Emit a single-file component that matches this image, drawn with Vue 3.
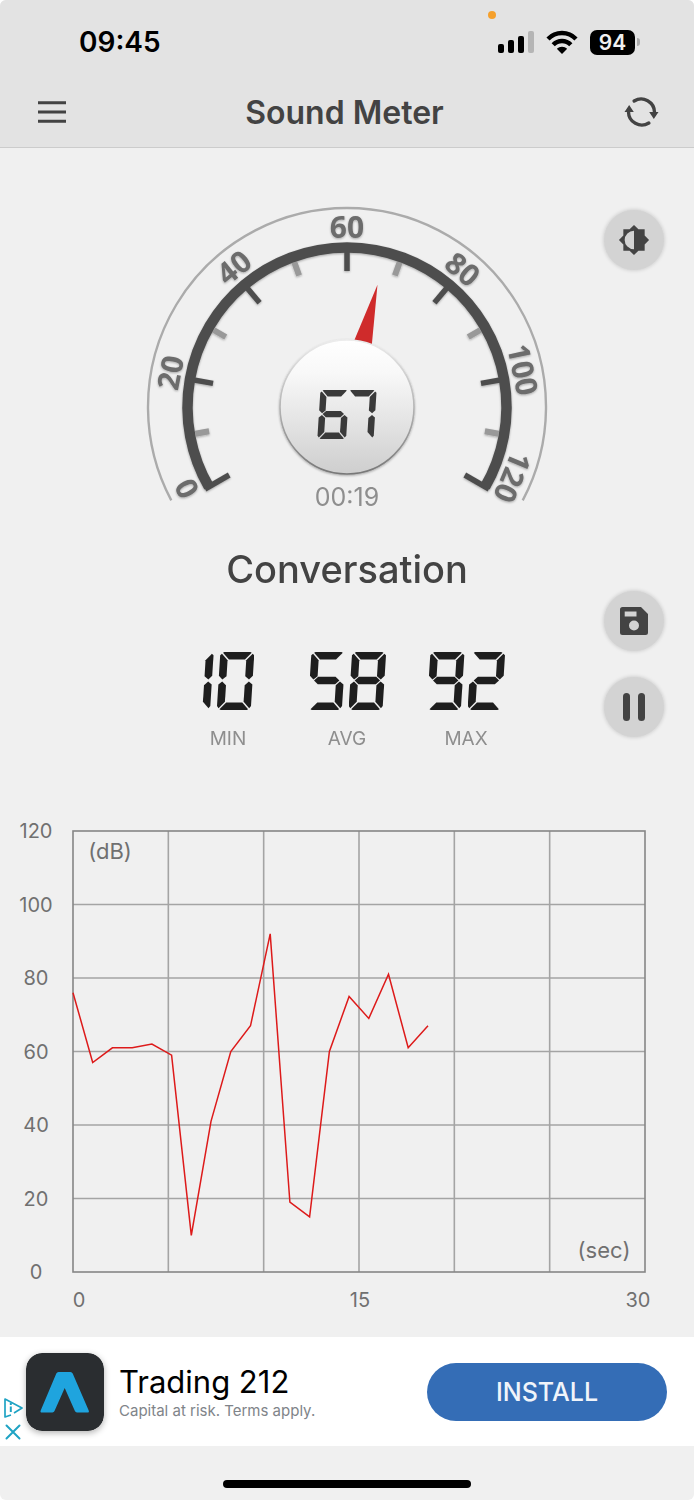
<script setup>
const level = 67
const elapsed = '00:19'
const stats = [
  { label: 'MIN', value: 10 },
  { label: 'AVG', value: 58 },
  { label: 'MAX', value: 92 },
]

/* Seven-segment display: upright outlines on a 102 x 175 grid, slanted below. */
const segments = {
  a: [[8, 2], [12, 0], [90, 0], [94, 2], [75, 23], [27, 23]],
  b: [[97, 5], [102, 10], [102, 72], [91, 83], [79, 73], [79, 25]],
  c: [[91, 89], [102, 98], [102, 163], [97, 170], [79, 150], [79, 100]],
  d: [[27, 152], [75, 152], [94, 173], [90, 175], [12, 175], [8, 173]],
  e: [[11, 89], [23, 100], [23, 150], [5, 170], [0, 163], [0, 98]],
  f: [[5, 5], [23, 25], [23, 73], [11, 83], [0, 72], [0, 10]],
  g: [[25, 75], [77, 75], [89, 86], [77, 97], [25, 97], [13, 86]],
}
const lit = {
  0: 'abcdef', 1: 'bc', 2: 'abged', 3: 'abgcd', 4: 'fgbc',
  5: 'afgcd', 6: 'afgedc', 7: 'abc', 8: 'abcdefg', 9: 'abcdfg',
}
const slant = 11
const outline = (name) => {
  const pts = segments[name].map(([x, y]) => {
    const sx = x + slant * (1 - y / 175)
    return `${(sx / 1.13).toFixed(2)}% ${(y / 1.75).toFixed(2)}%`
  })
  return { clipPath: `polygon(${pts.join(', ')})` }
}
const digits = (value) => String(value).split('')

/* Gauge: 0..120 dB over 240 degrees. */
const degrees = (db) => db * 2 - 120
const majors = [0, 20, 40, 60, 80, 100, 120]
const minors = [10, 30, 50, 70, 90, 110]
const marks = [
  { text: 0, turn: -117 },
  { text: 20, turn: -79 },
  { text: 40, turn: -39 },
  { text: 60, turn: 0 },
  { text: 80, turn: 40 },
  { text: 100, turn: 78 },
  { text: 120, turn: 113 },
]
const polar = (r, deg) => {
  const a = (deg * Math.PI) / 180
  return `${(202 + r * Math.sin(a)).toFixed(2)} ${(202 - r * Math.cos(a)).toFixed(2)}`
}
const arc = (r, deg) => `M${polar(r, -deg)}A${r} ${r} 0 1 1 ${polar(r, deg)}`

/* Chart */
const samples = [76, 57, 61, 61, 62, 59, 10, 41, 60, 67, 92, 19, 15, 60, 75, 69, 81, 61, 67]
const left = 73
const top = 12
const width = 572
const height = 441
const yAt = (db) => top + height - (db / 120) * height
const line = samples
  .map((db, i) => `${(left + i * 19.72).toFixed(1)},${yAt(db).toFixed(1)}`)
  .join(' ')
const rows = [20, 40, 60, 80, 100]
const cols = [1, 2, 3, 4, 5]
</script>

<template>
  <div class="screen">
    <header class="top">
      <div class="status">
        <span class="mic-dot"></span>
        <time class="clock">09:45</time>
        <div class="status-icons">
          <svg width="36" height="24" viewBox="0 0 36 24" aria-hidden="true">
            <rect x="0" y="14" width="6" height="9" rx="2" />
            <rect x="10" y="10" width="6" height="13" rx="2" />
            <rect x="20" y="6" width="6" height="17" rx="2" />
            <rect x="30" y="1" width="6" height="22" rx="2" fill="#b5b5b5" />
          </svg>
          <svg class="wifi" width="32" height="24" viewBox="0 0 32 24" aria-hidden="true">
            <path d="M2 9A19.5 19.5 0 0 1 30 9" fill="none" stroke="#000" stroke-width="4.4" />
            <path d="M7.2 14.8A12 12 0 0 1 24.8 14.8" fill="none" stroke="#000" stroke-width="4.4" />
            <path d="M16 24L10.8 18.8A7.4 7.4 0 0 1 21.2 18.8Z" />
          </svg>
          <span class="battery">94</span>
          <span class="nub"></span>
        </div>
      </div>
      <nav class="bar">
        <button class="plain" type="button" aria-label="Menu">
          <svg width="28" height="22" viewBox="0 0 28 22">
            <path d="M0 1.8H28M0 11H28M0 20.2H28" stroke="#434343" stroke-width="3" />
          </svg>
        </button>
        <h1>Sound Meter</h1>
        <button class="plain" type="button" aria-label="Reset">
          <svg width="37" height="34" viewBox="0 0 110 102">
            <g fill="none" stroke="#434343" stroke-width="10" stroke-linecap="round">
              <path d="M33 18A40 40 0 0 1 94 52" />
              <path d="M77 84A40 40 0 0 1 16 50" />
            </g>
            <path d="M78 51H106L92 72ZM4 51H32L18 30Z" fill="#434343" />
          </svg>
        </button>
      </nav>
    </header>

    <main>
      <section class="row gauge-row">
        <div class="gauge">
          <svg class="dial" viewBox="0 0 404 312" aria-hidden="true">
            <defs>
              <linearGradient id="knob" x1="0" y1="0" x2="0" y2="1">
                <stop offset="0" stop-color="#ffffff" />
                <stop offset="0.25" stop-color="#f8f8f8" />
                <stop offset="1" stop-color="#cecece" />
              </linearGradient>
              <linearGradient id="rim" x1="0" y1="0" x2="0" y2="1">
                <stop offset="0" stop-color="#ececec" />
                <stop offset="0.5" stop-color="#b4b4b4" />
                <stop offset="1" stop-color="#777777" />
              </linearGradient>
              <filter id="soft" x="-10%" y="-10%" width="120%" height="120%">
                <feDropShadow dx="0" dy="1" stdDeviation="1" flood-color="#000" flood-opacity="0.3" />
              </filter>
            </defs>
            <path :d="arc(199, 118)" fill="none" stroke="#ababab" stroke-width="2.4" />
            <g filter="url(#soft)">
              <line
                v-for="db in minors" :key="db" x1="202" x2="202" y1="48" y2="62"
                stroke="#999999" stroke-width="6" :transform="`rotate(${degrees(db)} 202 202)`"
              />
              <path :d="arc(159.5, 120)" fill="none" stroke="#4e4e4e" stroke-width="10.5" />
              <line
                v-for="db in majors" :key="db" x1="202" x2="202" y1="38" y2="66"
                stroke="#4e4e4e" stroke-width="5.5" :transform="`rotate(${degrees(db)} 202 202)`"
              />
              <text
                v-for="m in marks" :key="m.text" x="202" y="33" class="mark"
                :transform="`rotate(${m.turn} 202 202)`"
              >{{ m.text }}</text>
            </g>
            <path d="M202 76L212 142H192Z" fill="#cf2b2b" :transform="`rotate(${degrees(level)} 202 202)`" />
            <circle cx="202" cy="202" r="67" fill="url(#knob)" stroke="url(#rim)" stroke-width="1.6" filter="url(#soft)" />
          </svg>
          <div class="readout">
            <div class="lcd lcd-small" role="img" :aria-label="`${level} dB`">
              <span v-for="(d, i) in digits(level)" :key="i" class="digit" :class="`digit-${d}`">
                <i v-for="s in lit[d]" :key="s" :style="outline(s)"></i>
              </span>
            </div>
            <time class="elapsed">{{ elapsed }}</time>
          </div>
        </div>
        <div class="tools">
          <button class="round" type="button" aria-label="Theme">
            <svg width="32" height="32" viewBox="0 0 24 24" fill="#434343">
              <path fill-rule="evenodd" d="M20 15.3L23.3 12L20 8.7V4H15.3L12 .7L8.7 4H4V8.7L.7 12L4 15.3V20H8.7L12 23.3L15.3 20H20ZM12 19V5A7 7 0 0 0 12 19Z" />
            </svg>
          </button>
        </div>
      </section>

      <section class="row stats-row">
        <div class="summary">
          <h2>Conversation</h2>
          <dl class="stats">
            <div v-for="s in stats" :key="s.label" class="stat">
              <dt>{{ s.label }}</dt>
              <dd class="lcd" role="img" :aria-label="String(s.value)">
                <span v-for="(d, i) in digits(s.value)" :key="i" class="digit" :class="`digit-${d}`">
                  <i v-for="seg in lit[d]" :key="seg" :style="outline(seg)"></i>
                </span>
              </dd>
            </div>
          </dl>
        </div>
        <div class="tools tools-low">
          <button class="round" type="button" aria-label="Save">
            <svg width="28" height="28" viewBox="0 0 28 28" fill="#434343">
              <path fill-rule="evenodd" d="M2.5 0H21L28 7V25.5A2.5 2.5 0 0 1 25.5 28H2.5A2.5 2.5 0 0 1 0 25.5V2.5A2.5 2.5 0 0 1 2.5 0ZM4.7 4.5V9.5H16.5V4.5ZM14 13.5A5 5 0 0 0 14 23.5A5 5 0 0 0 14 13.5Z" />
            </svg>
          </button>
          <button class="round" type="button" aria-label="Pause">
            <svg width="22" height="28" viewBox="0 0 22 28" fill="#434343">
              <rect width="7" height="28" rx="3.5" />
              <rect x="15" width="7" height="28" rx="3.5" />
            </svg>
          </button>
        </div>
      </section>

      <svg class="chart" viewBox="0 0 694 500" role="img" aria-label="Sound level over time">
        <g stroke="#a4a4a4" stroke-width="1.6">
          <line v-for="db in rows" :key="`r${db}`" :x1="left" :x2="left + width" :y1="yAt(db)" :y2="yAt(db)" />
          <line v-for="c in cols" :key="`c${c}`" :x1="left + (width / 6) * c" :x2="left + (width / 6) * c" :y1="top" :y2="top + height" />
        </g>
        <rect :x="left" :y="top" :width="width" :height="height" fill="none" stroke="#868686" stroke-width="1.6" />
        <polyline :points="line" fill="none" stroke="#dd1a1a" stroke-width="1.5" />
        <g class="axis">
          <text v-for="db in [0, 20, 40, 60, 80, 100, 120]" :key="db" x="36" :y="yAt(db) + 7">{{ db }}</text>
          <text x="79" y="488">0</text>
          <text x="360" y="488">15</text>
          <text x="638" y="488">30</text>
          <text class="unit" x="110" y="40">(dB)</text>
          <text class="unit" x="604" y="439">(sec)</text>
        </g>
      </svg>
    </main>

    <aside class="ad">
      <div class="ad-controls">
        <button class="plain" type="button" aria-label="About this ad">
          <svg width="20" height="20" viewBox="0 0 20 20" fill="none" stroke="#1fa3c4" stroke-width="1.7" stroke-linejoin="round">
            <path d="M8 17L2 19V1L19 10L11 15" />
            <path d="M7.8 8.5V14M7.8 5V7" stroke-width="2" />
          </svg>
        </button>
        <button class="plain" type="button" aria-label="Close ad">
          <svg width="16" height="16" viewBox="0 0 16 16">
            <path d="M1.5 1.5L14.5 14.5M14.5 1.5L1.5 14.5" stroke="#1fa3c4" stroke-width="2" stroke-linecap="round" />
          </svg>
        </button>
      </div>
      <svg class="app-icon" width="78" height="78" viewBox="0 0 78 78" aria-hidden="true">
        <rect width="78" height="78" rx="16" fill="#2a2d30" />
        <path d="M32.5 19H44.5Q46 19 46.7 20.5L62.7 57.5Q63.5 59.5 61.5 59.5H51Q49.5 59.5 48.9 58.1L38.7 35L28.5 58.1Q27.9 59.5 26.4 59.5H15.9Q13.9 59.5 14.7 57.5L30.3 20.5Q31 19 32.5 19Z" fill="#1fa4de" />
      </svg>
      <div class="ad-text">
        <strong>Trading 212</strong>
        <span>Capital at risk. Terms apply.</span>
      </div>
      <button class="install" type="button">INSTALL</button>
    </aside>
    <footer class="home"><span></span></footer>
  </div>
</template>

<style>
body {
  margin: 0;
  background: #ffffff;
}
</style>

<style scoped>
.screen {
  display: flex;
  flex-direction: column;
  min-height: 100vh;
  overflow: hidden;
  border-radius: 6px;
  background: #f0f0f0;
  color: #434343;
  font-family: Inter, "Liberation Sans", sans-serif;
}
h1, h2, dl, dd { margin: 0; }
svg { display: block; }
.plain {
  display: flex;
  padding: 0;
  border: 0;
  background: none;
}
.top {
  background: #e3e3e3;
  border-bottom: 1px solid #cccccc;
}
.status {
  position: relative;
  display: flex;
  align-items: center;
  justify-content: space-between;
  height: 84px;
  padding: 0 54px 0 79px;
}
.mic-dot {
  position: absolute;
  top: 11px;
  right: 198px;
  width: 8px;
  height: 8px;
  border-radius: 50%;
  background: #f5a02c;
}
.clock {
  color: #000000;
  font-size: 28px;
  font-weight: 600;
}
.status-icons {
  display: flex;
  align-items: center;
}
.wifi { margin: 0 12px; }
.battery {
  width: 45px;
  height: 25px;
  border-radius: 7px;
  background: #000000;
  color: #f0f0f0;
  font-size: 21px;
  font-weight: 600;
  line-height: 25px;
  text-align: center;
}
.nub {
  width: 3px;
  height: 8px;
  margin-left: 2px;
  border-radius: 0 3px 3px 0;
  background: #aaaaaa;
}
.bar {
  display: flex;
  align-items: center;
  justify-content: space-between;
  height: 56px;
  padding: 0 34px 7px 38px;
}
h1 {
  font-size: 32px;
  font-weight: 600;
}
main { flex: 1; }
.row {
  display: grid;
  grid-template-columns: 1fr minmax(0, 404px) 1fr;
}
.gauge-row { padding-top: 57px; }
.gauge {
  display: grid;
  grid-column: 2;
}
.dial {
  grid-area: 1 / 1;
  width: 100%;
}
.mark {
  fill: #6c6c6c;
  font-family: "Open Sans", "Noto Sans", sans-serif;
  font-size: 30px;
  font-weight: 700;
  text-anchor: middle;
}
.readout {
  display: flex;
  grid-area: 1 / 1;
  flex-direction: column;
  align-items: center;
  padding-top: 185px;
}
.lcd {
  display: flex;
  gap: 3px;
  color: #1e1e1e;
  font-size: 58px;
}
.lcd-small {
  gap: 2px;
  color: #3a3a3a;
  font-size: 49px;
}
.digit {
  display: grid;
  width: 0.65em;
  height: 1em;
}
.digit i {
  grid-area: 1 / 1;
  background: currentColor;
}
.digit-1 { margin-left: -0.44em; }
.digit-7 { margin-left: -0.13em; }
.elapsed {
  margin-top: 44px;
  color: #8e8e8e;
  font-size: 25px;
  line-height: 28px;
}
.tools {
  display: flex;
  grid-column: 3;
  flex-direction: column;
  align-items: flex-end;
  gap: 26px;
  padding: 5px 30px 0 0;
}
.tools-low { padding-top: 74px; }
.round {
  display: flex;
  align-items: center;
  justify-content: center;
  width: 60px;
  height: 60px;
  padding: 0;
  border: 0;
  border-radius: 50%;
  background: #d3d3d3;
  box-shadow: 0 0 4px rgba(0, 0, 0, 0.2);
}
.summary { grid-column: 2; }
h2 {
  padding-top: 28px;
  font-size: 38px;
  font-weight: 500;
  line-height: 48px;
  text-align: center;
}
.stats {
  display: flex;
  justify-content: center;
  padding-top: 59px;
}
.stat {
  display: flex;
  flex-direction: column-reverse;
  align-items: center;
  gap: 17px;
  width: 119px;
}
dt {
  color: #8e8e8e;
  font-size: 19px;
  line-height: 24px;
}
.chart {
  width: 100%;
  margin-top: 68px;
}
.axis {
  fill: #707070;
  font-size: 20px;
  text-anchor: middle;
}
.unit { font-size: 22px; }
.ad {
  display: flex;
  align-items: center;
  height: 109px;
  padding-right: 27px;
  background: #ffffff;
}
.ad-controls {
  display: flex;
  flex-direction: column;
  align-items: center;
  align-self: flex-end;
  gap: 6px;
  width: 26px;
  padding-bottom: 6px;
}
.app-icon {
  border-radius: 16px;
  box-shadow: 0 2px 6px rgba(0, 0, 0, 0.3);
}
.ad-text {
  display: flex;
  flex: 1;
  flex-direction: column;
  margin-left: 15px;
}
.ad-text strong {
  color: #000000;
  font-size: 31px;
  font-weight: 400;
  line-height: 38px;
}
.ad-text span {
  color: #808489;
  font-size: 15px;
  line-height: 20px;
}
.install {
  width: 240px;
  height: 58px;
  border: 0;
  border-radius: 29px;
  background: #346db6;
  color: #f0f4fa;
  font-family: inherit;
  font-size: 25px;
  font-weight: 500;
}
.home {
  display: flex;
  justify-content: center;
  padding: 34px 0 12px;
}
.home span {
  width: 248px;
  height: 8px;
  border-radius: 4px;
  background: #000000;
}
</style>
